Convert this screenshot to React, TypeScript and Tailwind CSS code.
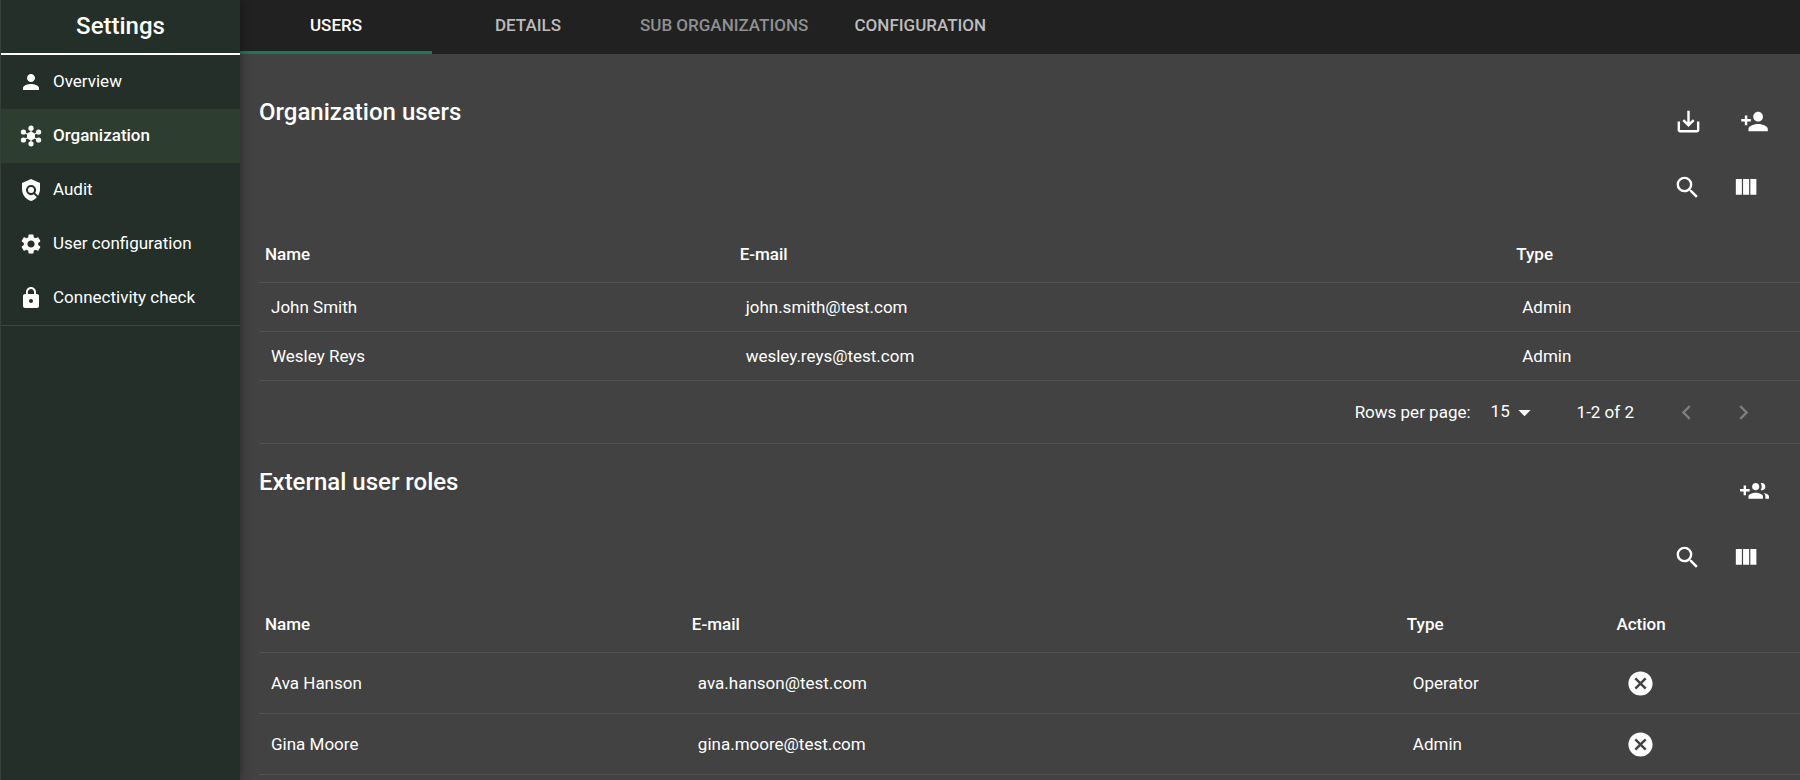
import { useState } from "react"
import {
    MdArrowDropDown,
    MdCancel,
    MdChevronLeft,
    MdChevronRight,
    MdLock,
    MdPerson,
    MdPersonAdd,
    MdPolicy,
    MdSaveAlt,
    MdSearch,
    MdSettings,
} from "react-icons/md"

interface User {
    name: string,
    email: string,
    type: string,
}

const HubIcon = ({ className }: { className?: string }) => (
    <svg viewBox="0 0 24 24" className={className} fill="currentColor" aria-hidden="true">
        <path d="M12 4v16M4.5 8l15 8M4.5 16l15-8" stroke="currentColor" strokeWidth="1.2" />
        <circle cx="12" cy="12" r="4" />
        <circle cx="12" cy="4.2" r="2.6" />
        <circle cx="12" cy="19.8" r="2.6" />
        <circle cx="4.4" cy="8" r="2.6" />
        <circle cx="4.4" cy="16" r="2.6" />
        <circle cx="19.6" cy="8" r="2.6" />
        <circle cx="19.6" cy="16" r="2.6" />
    </svg>
)

const ColumnsIcon = () => (
    <svg viewBox="0 0 24 24" className="size-[29px]" fill="currentColor" aria-hidden="true">
        <path d="M10 18h5V5h-5v13zm-6 0h5V5H4v13zM16 5v13h5V5h-5z" />
    </svg>
)

const GroupAddIcon = () => (
    <svg viewBox="0 0 24 24" className="size-[29px]" fill="currentColor" aria-hidden="true">
        <path d="M8 10H5V7H3v3H0v2h3v3h2v-3h3v-2zm10 1c1.66 0 2.99-1.34 2.99-3S19.66 5 18 5c-.32 0-.63.05-.91.14.57.81.9 1.79.9 2.86s-.34 2.04-.9 2.86c.28.09.59.14.91.14zm-5 0c1.66 0 2.99-1.34 2.99-3S14.66 5 13 5c-1.66 0-3 1.34-3 3s1.34 3 3 3zm6.62 2.16c.83.73 1.38 1.66 1.38 2.84v2h3v-2c0-1.54-2.37-2.49-4.38-2.84zM13 13c-2 0-6 1-6 3v2h12v-2c0-2-4-3-6-3z" />
    </svg>
)

const menu = [
    { label: "Overview", icon: MdPerson },
    { label: "Organization", icon: HubIcon },
    { label: "Audit", icon: MdPolicy },
    { label: "User configuration", icon: MdSettings },
    { label: "Connectivity check", icon: MdLock },
]

const tabs = [
    { label: "USERS", disabled: false },
    { label: "DETAILS", disabled: false },
    { label: "SUB ORGANIZATIONS", disabled: true },
    { label: "CONFIGURATION", disabled: false },
]

const users: User[] = [
    { name: "John Smith", email: "john.smith@test.com", type: "Admin" },
    { name: "Wesley Reys", email: "wesley.reys@test.com", type: "Admin" },
]

const externalUsers: User[] = [
    { name: "Ava Hanson", email: "ava.hanson@test.com", type: "Operator" },
    { name: "Gina Moore", email: "gina.moore@test.com", type: "Admin" },
]

const IconButton = ({ label, children }: { label: string, children: React.ReactNode }) => (
    <button aria-label={label} className="flex size-12 items-center justify-center rounded-full hover:bg-white/10">
        {children}
    </button>
)

const TableToolbar = () => (
    <div className="flex h-[76px] items-center justify-end gap-[10px] pt-px pr-[31px]">
        <IconButton label="Search"><MdSearch className="size-[29px]" /></IconButton>
        <IconButton label="View columns"><ColumnsIcon /></IconButton>
    </div>
)

const Sidebar = () => {

    const [selected, setSelected] = useState("Organization")

    return (
        <aside className="relative z-10 w-60 shrink-0 border-l border-[#34403a] bg-[#232f28] shadow-[0_0_10px_rgba(0,0,0,0.4)]">
            <h1 className="flex h-[55px] items-center justify-center border-b-2 border-white pb-[2px] text-2xl font-medium">Settings</h1>
            <nav className="border-b border-[#3a463e]">
                {menu.map(({ label, icon: Icon }) => (
                    <button
                        key={label}
                        onClick={() => setSelected(label)}
                        className={`flex h-[54px] w-full items-center gap-[10px] pl-[18px] text-left text-[17px] ${selected === label ? "bg-[#2d3d2f] font-medium" : ""}`}
                    >
                        <Icon className="size-6" />
                        {label}
                    </button>
                ))}
            </nav>
        </aside>
    )
}

const TabBar = () => {

    const [active, setActive] = useState("USERS")

    return (
        <div role="tablist" className="flex h-[54px] bg-[#212121]">
            {tabs.map(tab => (
                <button
                    key={tab.label}
                    role="tab"
                    aria-selected={active === tab.label}
                    disabled={tab.disabled}
                    onClick={() => setActive(tab.label)}
                    className={`min-w-48 border-b-[3px] px-4 text-[17px] font-medium ${active === tab.label ? "border-[#1b7a54] text-white" : "border-transparent text-[#bcbcbc] disabled:text-[#909090]"}`}
                >
                    {tab.label}
                </button>
            ))}
        </div>
    )
}

const App = () => {
    return (
        <div className="flex h-screen overflow-hidden bg-[#424242] font-[Roboto,sans-serif] text-white">
            <Sidebar />
            <main className="min-w-0 flex-1">
                <TabBar />
                <div className="pt-[19px] pl-[19px]">
                    <section className="border-t border-transparent pt-[23px]">
                        <div className="flex h-[52px] items-start justify-between pr-[22px]">
                            <h2 className="text-2xl leading-[30px] font-medium">Organization users</h2>
                            <div className="flex gap-[18px]">
                                <IconButton label="Download users"><MdSaveAlt className="size-[29px]" /></IconButton>
                                <IconButton label="Add user"><MdPersonAdd className="size-[29px]" /></IconButton>
                            </div>
                        </div>
                        <TableToolbar />
                        <table className="w-full table-fixed border-separate border-spacing-0 text-left text-[17px]">
                            <thead>
                                <tr className="h-[58px]">
                                    <th className="w-[30.8%] border-b border-[#525252] pt-[2px] pl-[6px] font-medium">Name</th>
                                    <th className="w-[50.4%] border-b border-[#525252] pt-[2px] pl-[6px] font-medium">E-mail</th>
                                    <th className="border-b border-[#525252] pt-[2px] pl-[6px] font-medium">Type</th>
                                </tr>
                            </thead>
                            <tbody>
                                {users.map(user => (
                                    <tr key={user.email} className="h-[49px]">
                                        <td className="border-b border-[#525252] pt-[2px] pl-3">{user.name}</td>
                                        <td className="border-b border-[#525252] pt-[2px] pl-3">{user.email}</td>
                                        <td className="border-b border-[#525252] pt-[2px] pl-3">{user.type}</td>
                                    </tr>
                                ))}
                            </tbody>
                        </table>
                        <div className="flex h-[62px] items-center justify-end pr-[33px] text-[17px]">
                            <label htmlFor="rows" className="pt-[2px]">Rows per page:</label>
                            <div className="relative ml-5 flex items-center">
                                <select id="rows" defaultValue="15" className="w-12 appearance-none bg-transparent">
                                    <option>10</option>
                                    <option>15</option>
                                    <option>25</option>
                                </select>
                                <MdArrowDropDown className="pointer-events-none absolute right-0 size-[29px]" />
                            </div>
                            <span className="ml-[38px] pt-[2px]">1-2 of 2</span>
                            <div className="ml-7 flex gap-[9px] text-[#7d7d7d]">
                                <button aria-label="Previous page" disabled className="flex size-12 items-center justify-center"><MdChevronLeft className="size-[29px]" /></button>
                                <button aria-label="Next page" disabled className="flex size-12 items-center justify-center"><MdChevronRight className="size-[29px]" /></button>
                            </div>
                        </div>
                    </section>
                    <section className="border-t border-[#525252] pt-[23px]">
                        <div className="flex h-[52px] items-start justify-between pr-[22px]">
                            <h2 className="text-2xl leading-[30px] font-medium">External user roles</h2>
                            <IconButton label="Add external user role"><GroupAddIcon /></IconButton>
                        </div>
                        <TableToolbar />
                        <table className="w-full table-fixed border-separate border-spacing-0 text-left text-[17px]">
                            <thead>
                                <tr className="h-[58px]">
                                    <th className="w-[27.7%] border-b border-[#525252] pt-[2px] pl-[6px] font-medium">Name</th>
                                    <th className="w-[46.4%] border-b border-[#525252] pt-[2px] pl-[6px] font-medium">E-mail</th>
                                    <th className="w-[13.6%] border-b border-[#525252] pt-[2px] pl-[6px] font-medium">Type</th>
                                    <th className="border-b border-[#525252] pt-[2px] pl-[6px] font-medium">Action</th>
                                </tr>
                            </thead>
                            <tbody>
                                {externalUsers.map(user => (
                                    <tr key={user.email} className="h-[61px]">
                                        <td className="border-b border-[#525252] pt-[2px] pl-3">{user.name}</td>
                                        <td className="border-b border-[#525252] pt-[2px] pl-3">{user.email}</td>
                                        <td className="border-b border-[#525252] pt-[2px] pl-3">{user.type}</td>
                                        <td className="border-b border-[#525252] pl-[6px]">
                                            <IconButton label={`Remove ${user.name}`}><MdCancel className="size-[29px]" /></IconButton>
                                        </td>
                                    </tr>
                                ))}
                            </tbody>
                        </table>
                    </section>
                </div>
            </main>
        </div>
    )
}

export default App
